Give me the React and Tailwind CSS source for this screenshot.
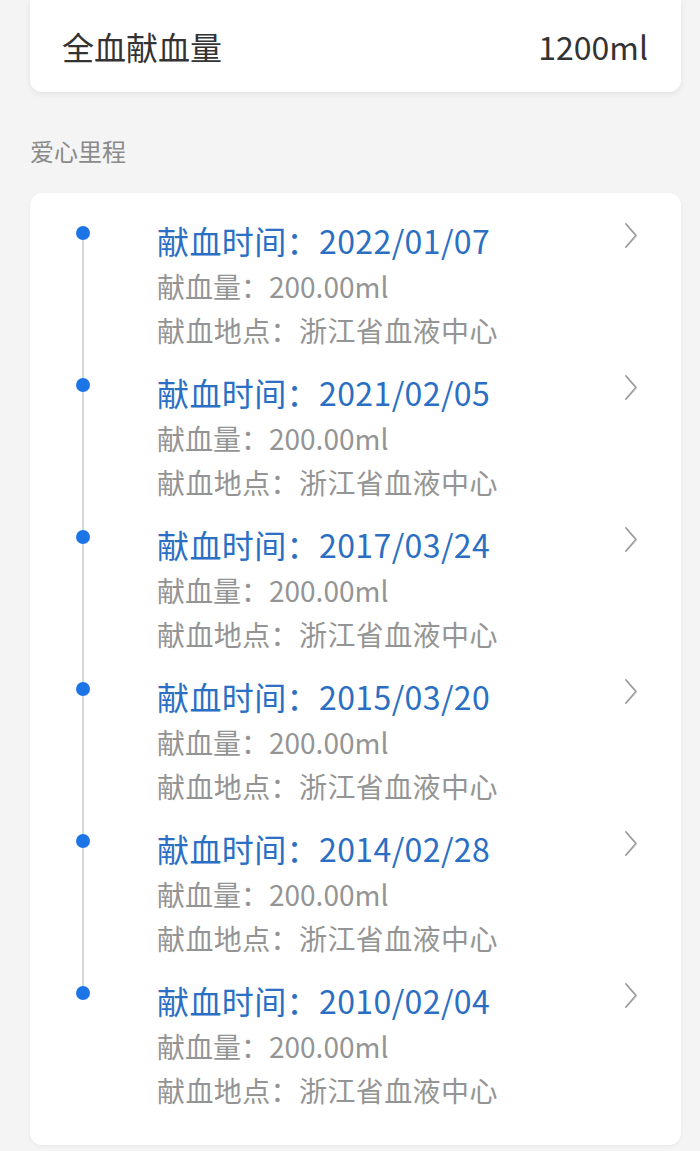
import React from "react";

const records = [
  "2022/01/07",
  "2021/02/05",
  "2017/03/24",
  "2015/03/20",
  "2014/02/28",
  "2010/02/04",
];

function Chevron() {
  return (
    <svg width="14" height="27" viewBox="0 0 14 27" fill="none" className="shrink-0">
      <polyline points="2,2 12,13.5 2,25" stroke="#9a9a9a" strokeWidth="1.8" strokeLinecap="round" strokeLinejoin="round" />
    </svg>
  );
}

export default function App() {
  return (
    <div
      className="min-h-[1151px] w-[700px] bg-[#f4f4f4] pb-[5px]"
      style={{ fontFamily: '"Noto Sans CJK SC", "Noto Sans", sans-serif' }}
    >
      <div className="ml-[30px] flex h-[92px] w-[651px] items-center justify-between rounded-b-[12px] bg-white pl-[32px] pr-[33px] shadow-[0_2px_6px_rgba(0,0,0,0.08)]">
        <span className="text-[32px] leading-none text-[#333333]">全血献血量</span>
        <span className="text-[32px] leading-none text-[#333333]">1200ml</span>
      </div>

      <div className="ml-[30px] pt-[43px] pb-[26px] text-[24px] leading-[32px] text-[#8a8a8a]">爱心里程</div>

      <div className="ml-[30px] flex w-[651px] flex-col gap-[16px] rounded-[12px] bg-white pt-[23px] pb-[33px] shadow-[0_1px_4px_rgba(0,0,0,0.05)]">
        {records.map((d, i) => (
          <div key={d} className="relative flex h-[136px]">
            {i < records.length - 1 && (
              <div className="absolute left-[52px] top-[17px] h-[152px] w-[1.5px] bg-[#d6d6d6]" />
            )}
            <div className="relative w-[127px] shrink-0">
              <div className="absolute left-[46px] top-[10px] h-[14px] w-[14px] rounded-full bg-[#1d74e6]" />
            </div>
            <div className="flex-1">
              <div className="text-[32px] leading-[48px] tracking-[0.4px] text-[#2a6fc3]">献血时间：{d}</div>
              <div className="text-[28px] leading-[44px] text-[#949494]">献血量：200.00ml</div>
              <div className="text-[28px] leading-[44px] tracking-[0.4px] text-[#949494]">献血地点：浙江省血液中心</div>
            </div>
            <div className="mr-[43px] pt-[6px]">
              <Chevron />
            </div>
          </div>
        ))}
      </div>
    </div>
  );
}
